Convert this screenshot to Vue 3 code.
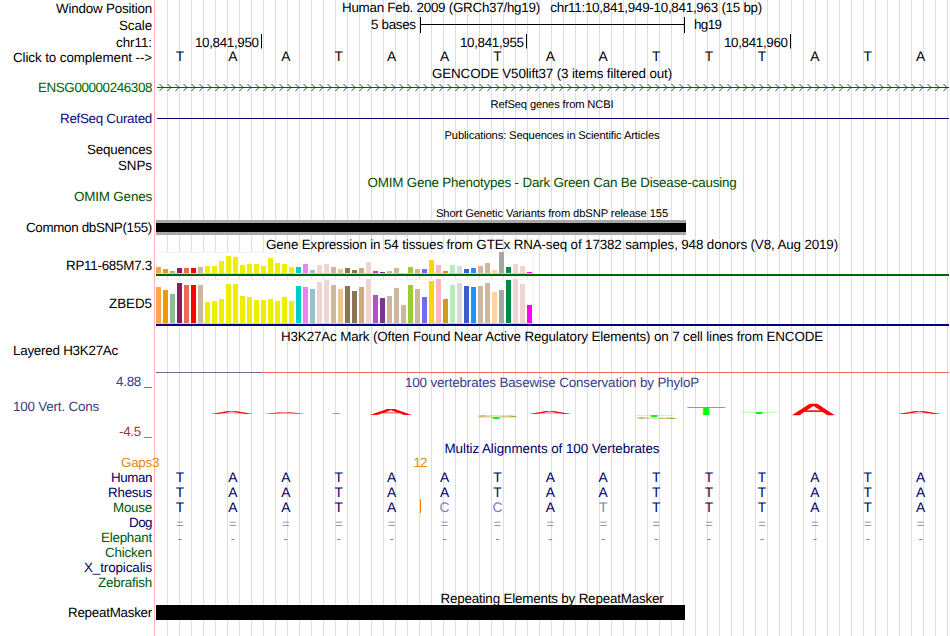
<template>
    <div class="browser">
        <div
            v-for="(row, i) in rows"
            :key="i"
            class="row"
            :style="{ height: row.h + 'px' }">
            <!-- left label -->
            <div
                class="side"
                :class="[row.color, { left: row.left }]"
                :style="{ paddingTop: (row.lp || 0) + 'px' }">
                <span v-if="row.label" v-fit="row.lw">{{ row.label }}</span>
                <i v-if="row.mark" class="mark"></i>
            </div>
            <!-- track content -->
            <div class="track">
                <div
                    v-if="row.title"
                    class="title"
                    :class="[row.color, { small: row.small }]"
                    :style="{ paddingTop: (row.tp || 0) + 'px' }">
                    <span v-fit="row.tw">{{ row.title }}</span>
                </div>
                <div v-if="row.bases" class="bases" :class="row.baseColor">
                    <span
                        v-for="(b, n) in row.bases"
                        :key="n"
                        :class="{ faint: row.faint && row.faint.includes(n) }"
                        >{{ b }}</span
                    >
                </div>
                <svg v-if="row.kind === 'scale'" class="draw" width="795" height="17">
                    <text x="216" y="12" textLength="45">5 bases</text>
                    <path class="ink" d="M265 0h1v16h-1zM529 0h1v16h-1zM265 7h265v1h-265z" />
                    <text x="539" y="12" textLength="28">hg19</text>
                </svg>
                <svg v-if="row.kind === 'ruler'" class="draw" width="795" height="15">
                    <g v-for="t in ticks" :key="t.x">
                        <text :x="t.x - 66" y="13" textLength="64">{{ t.text }}</text>
                        <rect :x="t.x" y="0" width="1" height="14.5" />
                    </g>
                </svg>
                <svg v-if="row.kind === 'gene'" class="draw gene" width="794" height="16">
                    <rect x="2" y="7" width="792" height="1" />
                    <path v-for="n in 99" :key="n" :d="chevron(n)" />
                </svg>
                <div v-if="row.kind === 'line'" class="refseq"></div>
                <div v-if="row.kind === 'snp'" class="snp"></div>
                <div v-if="row.kind === 'gtex'" class="gtex" :class="row.base">
                    <div class="box">
                        <i
                            v-for="(v, n) in row.values"
                            :key="n"
                            :style="{ height: v + 'px', background: tissues[n] }"></i>
                    </div>
                </div>
                <div v-if="row.kind === 'h3k'" class="h3k"></div>
                <svg v-if="row.kind === 'logo'" class="draw logo" width="795" height="34">
                    <text
                        v-for="(g, n) in logo"
                        :key="n"
                        :fill="g.fill"
                        :stroke="g.fill"
                        :stroke-width="g.c === 'A' ? 2.5 : 0"
                        :opacity="g.o || 1"
                        :transform="place(g)"
                        >{{ g.c }}</text
                    >
                </svg>
                <svg v-if="row.kind === 'gaps'" class="draw gaps" width="795" height="15">
                    <text x="-3" y="12">3</text>
                    <text x="258.5" y="12" textLength="14">12</text>
                </svg>
                <i v-if="row.insert" class="insert"></i>
                <div v-if="row.kind === 'repeat'" class="repeat"></div>
            </div>
        </div>
    </div>
</template>
<script setup>
// stretch or tighten a text to a given width
const vFit = {
    mounted(el, { value }) {
        if (!value) return;
        const w = el.getBoundingClientRect().width;
        el.style.letterSpacing = (value - w) / el.textContent.length + "px";
    },
};

const human = "TAATAATAATTTATA";

const ticks = [
    { x: 106, text: "10,841,950" },
    { x: 371, text: "10,841,955" },
    { x: 635, text: "10,841,960" },
];

// one colour for each tissue
const tissues = [
    "#ffa54f", "#ee9a00", "#8fbc8f", "#8b1c62", "#ee6a50", "#ff0000", "#cdb79e",
    ...Array(13).fill("#eeee00"),
    "#00cdcd", "#ee82ee", "#9ac0cd", "#eed5d2", "#eed5d2", "#cdb79e", "#eec591",
    "#8b7355", "#8b7355", "#cdaa7d", "#eed5d2", "#b452cd", "#7a378b", "#cdb79e",
    "#cdb79e", "#cdb79e", "#9acd32", "#cdb79e", "#7a67ee", "#ffd700", "#ffb6c1",
    "#cd9b1d", "#b4eeb4", "#d9d9d9", "#3a5fcd", "#1e90ff", "#cdb79e", "#cdb79e",
    "#ffd39b", "#a6a6a6", "#008b45", "#eed5d2", "#eed5d2", "#ff00ff",
];
const rp11 = [
    6, 4, 2, 5, 5, 5, 6, 7, 7, 12, 17, 16, 8, 9, 9, 7, 15, 10, 9, 6, 6, 9, 3, 8, 9, 6, 4,
    5, 3, 5, 11, 2, 1, 2, 5, 0, 6, 4, 4, 13, 8, 2, 8, 7, 4, 5, 7, 10, 3, 21, 6, 9, 7, 1,
];
const zbed5 = [
    36, 33, 29, 40, 38, 38, 38, 21, 22, 24, 39, 39, 27, 26, 23, 23, 24, 22, 26, 22, 37, 36,
    34, 41, 43, 38, 34, 37, 32, 36, 44, 28, 25, 27, 35, 18, 38, 34, 26, 42, 44, 24, 38, 40,
    37, 36, 37, 40, 31, 33, 43, 44, 39, 18,
];

// conservation letters: left edge, top, width, height
const logo = [
    { c: "A", x: 57, y: 21, w: 40, h: 3, fill: "#ff0000" },
    { c: "A", x: 110, y: 22, w: 40, h: 2, fill: "#ff0000", o: 0.8 },
    { c: "T", x: 162, y: 23, w: 38, h: 1, fill: "#00ff00" },
    { c: "A", x: 216, y: 19, w: 40, h: 6, fill: "#ff0000" },
    { c: "G", x: 323, y: 25, w: 40, h: 2, fill: "#b0a830" },
    { c: "T", x: 322, y: 27, w: 38, h: 2, fill: "#00ff00" },
    { c: "A", x: 375, y: 21, w: 40, h: 3, fill: "#ff0000" },
    { c: "T", x: 480, y: 25, w: 38, h: 2, fill: "#00ff00" },
    { c: "G", x: 482, y: 27, w: 40, h: 2, fill: "#b0a830" },
    { c: "T", x: 532, y: 17, w: 38, h: 8, fill: "#00ff00" },
    { c: "T", x: 585, y: 22, w: 38, h: 2, fill: "#00ff00" },
    { c: "A", x: 638, y: 14, w: 41, h: 11, fill: "#ff0000" },
    { c: "A", x: 744, y: 21, w: 41, h: 3, fill: "#ff0000" },
];
const inkWidth = { A: 67, T: 57, G: 67 };

function place(g) {
    const sx = g.w / inkWidth[g.c];
    const left = g.c === "A" ? 0 : g.c === "T" ? 2 : 5;
    return `translate(${g.x - left * sx} ${g.y + g.h}) scale(${sx} ${g.h / 68.8})`;
}

function chevron(n) {
    const x = n * 8 - 3.5;
    return `M${x} 4l3.5 3.5l-3.5 3.5`;
}

const rows = [
    { h: 17, label: "Window Position", lw: 96, lp: 1, title: "Human Feb. 2009 (GRCh37/hg19)\u00a0\u00a0\u00a0chr11:10,841,949-10,841,963 (15 bp)", tw: 420 },
    { h: 17, label: "Scale", lw: 33, lp: 1, kind: "scale" },
    { h: 15, label: "chr11:", lw: 36, lp: 1, kind: "ruler" },
    { h: 17, label: "Click to complement -->", lw: 139, lp: 1, bases: human },
    { h: 14, title: "GENCODE V50lift37 (3 items filtered out)", tw: 240 },
    { h: 16, label: "ENSG00000246308", lw: 114, color: "green", kind: "gene" },
    { h: 15, title: "RefSeq genes from NCBI", tw: 123, small: true, tp: 2 },
    { h: 16, label: "RefSeq Curated", lw: 92, color: "navy", kind: "line" },
    { h: 15, title: "Publications: Sequences in Scientific Articles", tw: 215, small: true, tp: 2 },
    { h: 16, label: "Sequences", lw: 65 },
    { h: 16, label: "SNPs", lw: 34 },
    { h: 15, title: "OMIM Gene Phenotypes - Dark Green Can Be Disease-causing", tw: 369, color: "dark", tp: 1 },
    { h: 15, label: "OMIM Genes", lw: 78, color: "dark" },
    { h: 16, title: "Short Genetic Variants from dbSNP release 155", tw: 232, small: true, tp: 3 },
    { h: 15, label: "Common dbSNP(155)", lw: 126, kind: "snp" },
    { h: 17, title: "Gene Expression in 54 tissues from GTEx RNA-seq of 17382 samples, 948 donors (V8, Aug 2019)", tw: 572, tp: 2 },
    { h: 24, label: "RP11-685M7.3", lw: 86, lp: 6, kind: "gtex", values: rp11, base: "base-green" },
    { h: 3 },
    { h: 47, label: "ZBED5", lw: 43, lp: 17, kind: "gtex", values: zbed5, base: "base-navy" },
    { h: 17, title: "H3K27Ac Mark (Often Found Near Active Regulatory Elements) on 7 cell lines from ENCODE", tw: 542, tp: 3 },
    { h: 30, label: "Layered H3K27Ac", lw: 105, left: true, kind: "h3k" },
    { h: 17, label: "4.88", lw: 25, lp: 1, mark: true, color: "slate", title: "100 vertebrates Basewise Conservation by PhyloP", tw: 294, tp: 2 },
    { h: 34, label: "100 Vert. Cons", lw: 86, lp: 9, left: true, color: "slate", kind: "logo" },
    { h: 17, label: "-4.5", lw: 22, mark: true, color: "maroon" },
    { h: 14, title: "Multiz Alignments of 100 Vertebrates", tw: 215, color: "deep" },
    { h: 15, label: "Gaps", lw: 31, color: "orange", kind: "gaps" },
    { h: 15, label: "Human", lw: 41, color: "deep", bases: human, baseColor: "deep" },
    { h: 15, label: "Rhesus", lw: 44, color: "deep", bases: human, baseColor: "deep" },
    { h: 15, label: "Mouse", lw: 39, color: "forest", bases: "TAATACCATTTTATA", baseColor: "deep", faint: [5, 6, 8], insert: true },
    { h: 15, label: "Dog", lw: 23, color: "deep", bases: "=".repeat(15), baseColor: "pale" },
    { h: 15, label: "Elephant", lw: 51, color: "forest", bases: "-".repeat(15), baseColor: "pale" },
    { h: 15, label: "Chicken", lw: 47, color: "forest" },
    { h: 15, label: "X_tropicalis", lw: 68, color: "deep" },
    { h: 15, label: "Zebrafish", lw: 54, color: "forest" },
    { h: 15, title: "Repeating Elements by RepeatMasker", tw: 223, tp: 1 },
    { h: 15, label: "RepeatMasker", lw: 84, kind: "repeat" },
    { h: 16 },
];
</script>
<style>
body {
    background: #fff;
    overflow: hidden;
}
</style>
<style scoped>
.browser {
    width: 950px;
    height: 636px;
    overflow: hidden;
    font-family: "Liberation Sans", Arial, sans-serif;
    font-size: 13.4px;
    line-height: 15px;
    color: #000;
    white-space: nowrap;
    text-rendering: geometricPrecision;
    /* vertical guide lines */
    background: repeating-linear-gradient(to right, transparent 0 11px, #dcdcf8 11px 12px) 156px 0 / 794px 100% no-repeat;
}
.row {
    display: flex;
}
.side {
    box-sizing: border-box;
    flex: none;
    width: 155px;
    padding-right: 2px;
    border-right: 1px solid #ffb4b4;
    text-align: right;
}
.side.left {
    padding-left: 13px;
    text-align: left;
}
.mark {
    display: inline-block;
    width: 8px;
    height: 1px;
    margin-left: 3px;
    vertical-align: -2px;
    background: currentColor;
    opacity: 0.7;
}
.track {
    position: relative;
    flex: 1;
    min-width: 0;
}
.title {
    padding-right: 1px;
    text-align: center;
}
.small {
    font-size: 11.2px;
}
.draw {
    display: block;
    overflow: visible;
}
.gene {
    fill: #006400;
}
.gene path {
    fill: none;
    stroke: #003c00;
    stroke-width: 0.9;
}
.bases {
    display: flex;
    width: 793.5px;
    margin-left: -1.5px;
    font-size: 13.8px;
}
.bases span {
    flex: 1;
    text-align: center;
}
.faint,
.pale {
    color: #8080b4;
}
.bases.pale {
    padding-top: 1px;
    font-size: 13px;
}
.refseq {
    height: 1px;
    margin: 7px 1px 0 2px;
    background: #000070;
}
.snp {
    box-sizing: border-box;
    width: 530px;
    height: 15px;
    margin-left: 1px;
    background: #000;
    border: solid #a8a8a8;
    border-width: 3px 0;
    box-shadow: inset -1px 0 #000;
}
.gtex {
    box-sizing: border-box;
    height: 100%;
    margin: 0 1px;
    border-bottom: 2px solid;
}
.base-green {
    border-color: #006400;
}
.base-navy {
    border-color: #000080;
}
.box {
    box-sizing: border-box;
    display: flex;
    align-items: flex-end;
    gap: 2px;
    width: 378px;
    height: 100%;
    background: #fff;
    border-bottom: 1px solid #d0d0d0;
    box-shadow: inset 1px 1px #f3f3f3, inset -1px 0 #f3f3f3;
}
.box i {
    flex: none;
    width: 5px;
}
.h3k {
    height: 1px;
    margin: 29px 1px 0;
    background: linear-gradient(to right, #80608c 106px, #ff6464 106px);
}
.logo text {
    font-size: 100px;
}
.gaps {
    fill: #e68a14;
}
.insert {
    position: absolute;
    left: 265px;
    top: -1px;
    width: 1px;
    height: 14px;
    background: #e68200;
}
.repeat {
    width: 529px;
    height: 15px;
    margin-left: 1px;
    background: #000;
}
.green {
    color: #006400;
}
.dark {
    color: #005000;
}
.forest {
    color: #005a0a;
}
.navy {
    color: #0c0c78;
}
.deep {
    color: #000064;
}
.slate {
    color: #3c3c8c;
}
.maroon {
    color: #8c3c3c;
}
.orange {
    color: #e68a14;
}
</style>
